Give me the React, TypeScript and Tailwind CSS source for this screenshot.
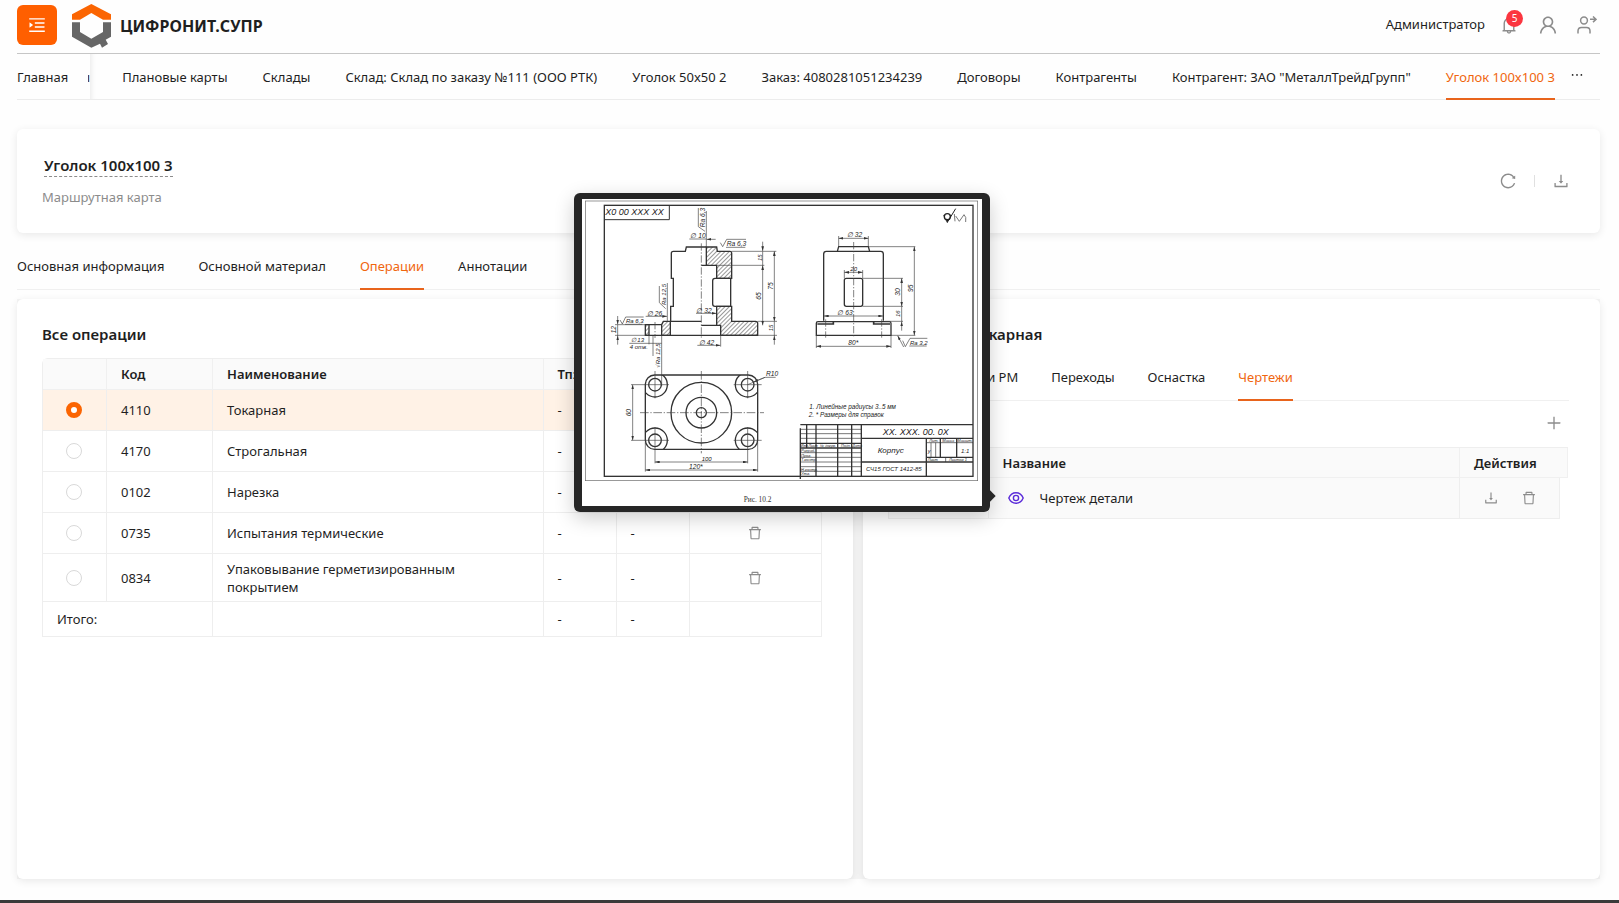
import { type ReactNode } from "react";
import {
  AiOutlineBell,
  AiOutlineDelete,
  AiOutlineDownload,
  AiOutlineEllipsis,
  AiOutlineMenuUnfold,
  AiOutlinePlus,
  AiOutlineReload,
  AiOutlineUser,
} from "react-icons/ai";

const cardShadow = "rounded-md bg-white shadow-[0_2px_8px_rgba(0,0,0,0.09)]";

function Logo() {
  return (
    <svg viewBox="0 0 117 132" className="h-11 w-[39px]" aria-hidden="true">
      <path d="M0 31 L58 0 L117 31 V47 H93 L58 27 L24 47 H0 Z" fill="#fb6502" />
      <path
        d="M0 55 H24 V84 L58 104 L93 84 V55 H117 V98 L101 107 L108 120 L90 131 L84 119 L58 131 L0 98 Z"
        fill="#666"
      />
    </svg>
  );
}

function SignOutIcon() {
  return (
    <svg viewBox="0 0 20 18" className="h-[18px] w-5" fill="none" stroke="currentColor" strokeWidth="1.5" aria-hidden="true">
      <circle cx="7" cy="4.5" r="3.4" />
      <path d="M1 17.5 V15 Q1 11.5 4.5 11.5 H9.5 Q13 11.5 13 15 V17.5" />
      <path d="M13 3.3 H19 M16 0.5 L19 3.3 L16 6.1" />
    </svg>
  );
}

function EyeIcon() {
  return (
    <svg viewBox="0 0 16 12" className="h-3 w-4" fill="none" stroke="currentColor" strokeWidth="1.4" aria-hidden="true">
      <path d="M0.8 6 C2.2 2.6 4.8 0.8 8 0.8 S13.8 2.6 15.2 6 C13.8 9.4 11.2 11.2 8 11.2 S2.2 9.4 0.8 6 Z" />
      <circle cx="8" cy="6" r="2.6" />
    </svg>
  );
}

function Tab({ children, active = false }: { children: ReactNode; active?: boolean }) {
  return (
    <button
      type="button"
      role="tab"
      aria-selected={active}
      className={
        active
          ? "-mb-px shrink-0 border-b-2 border-[#e8641c] pt-px text-[#f0660f] whitespace-nowrap"
          : "-mb-px shrink-0 border-b-2 border-transparent pt-px whitespace-nowrap"
      }
    >
      {children}
    </button>
  );
}

/* ---------- Drawing preview ---------- */

function DimText({ x, y, size = 20, rotate = false, children }: { x: number; y: number; size?: number; rotate?: boolean; children: ReactNode }) {
  return (
    <text x={x} y={y} fontSize={size} transform={rotate ? `rotate(-90 ${x} ${y})` : undefined}>
      {children}
    </text>
  );
}

function Dim({ d, both = true }: { d: string; both?: boolean }) {
  return <path d={d} markerEnd="url(#arrow)" markerStart={both ? "url(#arrow)" : undefined} />;
}

function Drawing() {
  return (
    <svg viewBox="0 0 1200 921" className="block w-full bg-white" role="img" aria-label="Чертеж детали">
      <defs>
        <pattern id="hatch" width="9" height="9" patternUnits="userSpaceOnUse" patternTransform="rotate(45)">
          <path d="M0 0 V9" stroke="#333" strokeWidth="3" />
        </pattern>
        <marker id="arrow" viewBox="0 0 14 8" refX="14" refY="4" markerWidth="14" markerHeight="8" markerUnits="userSpaceOnUse" orient="auto-start-reverse">
          <path d="M0 0 L14 4 L0 8 Z" fill="#333" />
        </marker>
        <clipPath id="plate">
          <rect x="241" y="72" width="337" height="223" rx="28" />
        </clipPath>
      </defs>
      <rect x="10" y="6" width="1177" height="839" fill="none" stroke="#666" strokeWidth="2" />
      <rect x="67" y="19" width="1106" height="813" fill="none" stroke="#333" strokeWidth="4" />
      <path d="M67 62 H262 V19" fill="none" stroke="#333" strokeWidth="3" />

      {/* Front view */}
      <g transform="translate(-51 -39)">
        <g fill="url(#hatch)" stroke="#333" strokeWidth="4">
          <path d="M424 183 H455 L457 196 H495 Q500 196 500 201 V277 H455 V238 H424 Z" />
          <path d="M455 361 H500 V406 H572 Q578 406 578 412 V448 H467 V418 H455 Z" />
          <path d="M241 416 H252 V448 H241 Z M290 416 L295 406 H316 V448 H290 Z" />
        </g>
        <g fill="none" stroke="#333" strokeWidth="4">
          <path d="M424 183 H364 L361 196 H325 Q319 196 319 202 V277 H325 V361 H317 V406 H409 M252 416 H290 M241 448 H578" />
          <path d="M409 238 H424 M409 418 H455 M497 277 V361 H450 Q443 361 443 354 V284 Q443 277 450 277 Z" />
        </g>
        <g fill="none" stroke="#444" strokeWidth="2">
          <path d="M409 172 V458 M270 408 V456" strokeDasharray="22 5 4 5" />
          <path d="M500 196 H634 M457 238 H598 M578 406 H636 M578 448 H636 M150 416 H241 M150 448 H241" />
          <path d="M424 75 V183 M400 66 V122 L420 136 M307 291 V406 M283 300 V350 L302 368 M290 448 V600 M264 450 V510 M252 448 V475" />
          <path d="M466 170 L473 182 L485 160 H543 M483 184 H541 M165 402 L172 414 L182 393 H236 M180 415 H232" />
          <Dim d="M593 167 V195" both={false} />
          <Dim d="M593 238 V418" />
          <Dim d="M628 196 V406" />
          <Dim d="M628 476 V449" both={false} />
          <path d="M593 196 V238 M628 406 V450" />
          <Dim d="M158 390 V415" both={false} />
          <Dim d="M158 476 V449" both={false} />
          <path d="M158 416 V450 M373 159 H424" />
          <Dim d="M452 160 H425" both={false} />
          <Dim d="M242 391 H306" both={false} />
          <Dim d="M393 382 H454" both={false} />
          <Dim d="M397 478 H466" both={false} />
          <path d="M467 448 V482 M193 472 H290" />
        </g>
      </g>

      {/* Plan view */}
      <g transform="translate(-51 456)" fill="none">
        <g stroke="#333" strokeWidth="4">
          <rect x="241" y="72" width="337" height="223" rx="28" />
          <g clipPath="url(#plate)">
            <circle cx="270" cy="101" r="37" />
            <circle cx="548" cy="101" r="37" />
            <circle cx="270" cy="268" r="37" />
            <circle cx="548" cy="268" r="37" />
          </g>
          <circle cx="270" cy="101" r="19" />
          <circle cx="548" cy="101" r="19" />
          <circle cx="270" cy="268" r="19" />
          <circle cx="548" cy="268" r="19" />
          <circle cx="409" cy="185" r="91" />
          <circle cx="409" cy="185" r="46" />
          <circle cx="409" cy="185" r="15" />
        </g>
        <g stroke="#444" strokeWidth="2">
          <path d="M225 185 H597 M409 60 V307" strokeDasharray="26 5 4 5" />
          <path d="M198 101 H312 M198 268 H312 M506 101 H590 M506 268 H590 M270 60 V142 M548 60 V142 M270 228 V337 M548 228 V337 M241 272 V362 M578 272 V362" />
          <Dim d="M203 101 V268" />
          <Dim d="M270 333 H548" />
          <Dim d="M241 357 H578" />
          <Dim d="M600 79 L566 93" both={false} />
          <path d="M548 101 L600 79 H632" />
        </g>
      </g>

      {/* Side view */}
      <g transform="translate(594 -39)" fill="none">
        <g stroke="#333" strokeWidth="4">
          <path d="M172 196 L176 182 H265 L269 196 M131 404 V204 Q131 196 139 196 H302 Q310 196 310 204 V404" />
          <path d="M109 448 V412 Q109 407 114 407 H328 Q333 407 333 412 V448 Z" />
          <path d="M112 414 H160 V407 M330 414 H281 V407" strokeWidth="5" />
          <rect x="193" y="277" width="55" height="84" rx="6" />
        </g>
        <g stroke="#444" strokeWidth="2">
          <path d="M221 168 V455 M137 400 V455 M305 400 V455" strokeDasharray="22 5 4 5" />
          <path d="M176 150 V182 M265 150 V182 M193 252 V277 M248 252 V277 M109 448 V486 M333 448 V486 M267 182 H406 M248 277 H369 M248 361 H369 M314 406 H369 M333 448 H406" />
          <Dim d="M176 157 H265" />
          <Dim d="M193 259 H248" />
          <Dim d="M132 390 H309" />
          <Dim d="M109 481 H333" />
          <Dim d="M365 277 V361" />
          <Dim d="M365 434 V407" both={false} />
          <path d="M365 361 V407 M388 480 H440" />
          <Dim d="M403 182 V448" />
          <Dim d="M371 483 L353 449" both={false} />
          <path d="M368 464 L376 482 L390 457 H442" />
        </g>
        <path d="M491 88 H513 L502 110 Z" fill="#222" stroke="#222" strokeWidth="2" />
        <circle cx="502" cy="92" r="9" fill="white" stroke="#222" strokeWidth="4" />
        <path d="M505 104 L527 68" stroke="#222" strokeWidth="3" />
        <path d="M523 84 L525 106 M527 90 L538 106 L552 86 Q560 92 557 108" stroke="#777" strokeWidth="3" />
      </g>

      {/* Title block */}
      <g transform="translate(594 456)" fill="none" stroke="#333">
        <path strokeWidth="4" d="M61 221 H579 M61 232 V384 M80 221 V291 M108 221 V376 M173 221 V376 M215 221 V376 M244 221 V376 M244 262 H579 M244 333 H579 M439 262 V376 M439 319 H579 M481 262 V319 M530 262 V319 M61 277 H244 M61 291 H244" />
        <path strokeWidth="2" d="M61 235 H244 M61 248 H244 M61 262 H244 M61 305 H244 M61 319 H244 M61 333 H244 M61 347 H244 M61 361 H244 M439 275 H579 M453 275 V319 M467 275 V319 M497 319 V333" />
      </g>

      <g fill="#222" fontFamily="Liberation Sans, sans-serif" fontStyle="italic">
        <g transform="translate(-51 -39)">
          <DimText x={121} y={88} size={27}>X0 00 XXX XX</DimText>
          <DimText x={376} y={157}>∅ 10</DimText>
          <DimText x={485} y={180}>Ra 6,3</DimText>
          <DimText x={419} y={124} rotate>Ra 6,3</DimText>
          <DimText x={590} y={225} size={18} rotate>15</DimText>
          <DimText x={624} y={311} rotate>75</DimText>
          <DimText x={589} y={341} rotate>65</DimText>
          <DimText x={624} y={436} size={18} rotate>15</DimText>
          <DimText x={246} y={390}>∅ 26</DimText>
          <DimText x={183} y={412} size={18}>Ra 6,3</DimText>
          <DimText x={302} y={357} size={18} rotate>Ra 12,5</DimText>
          <DimText x={394} y={380}>∅ 32</DimText>
          <DimText x={154} y={442} rotate>12</DimText>
          <DimText x={197} y={469} size={18}>∅ 13</DimText>
          <DimText x={194} y={488} size={18}>4 отв.</DimText>
          <DimText x={402} y={476}>∅ 42</DimText>
          <DimText x={285} y={545} size={18} rotate>√Ra 12,5</DimText>
        </g>
        <g transform="translate(-51 456)">
          <DimText x={199} y={196} rotate>60</DimText>
          <DimText x={603} y={76}>R10</DimText>
          <DimText x={410} y={330} size={18}>100</DimText>
          <DimText x={372} y={354}>120*</DimText>
        </g>
        <g transform="translate(594 -39)">
          <DimText x={201} y={154}>∅ 32</DimText>
          <DimText x={211} y={256} size={18}>20</DimText>
          <DimText x={172} y={387}>∅ 63</DimText>
          <DimText x={205} y={478}>80*</DimText>
          <DimText x={360} y={329} rotate>30</DimText>
          <DimText x={360} y={393} size={18} rotate>16</DimText>
          <DimText x={399} y={318} rotate>95</DimText>
          <DimText x={390} y={476} size={18}>Ra 3,2</DimText>
        </g>
        <g transform="translate(594 456)">
          <DimText x={88} y={174} size={19}>1. Линейные радиусы 3..5 мм</DimText>
          <DimText x={86} y={197} size={19}>2. * Размеры для справок</DimText>
          <DimText x={308} y={251} size={27}>XX. XXX. 00. 0X</DimText>
          <DimText x={293} y={307} size={24}>Корпус</DimText>
          <DimText x={258} y={360} size={18}>СЧ15 ГОСТ 1412-85</DimText>
          <DimText x={448} y={273} size={12}>Лит.</DimText>
          <DimText x={487} y={273} size={12}>Масса</DimText>
          <DimText x={532} y={273} size={12}>Масшт.</DimText>
          <DimText x={443} y={306} size={16}>у</DimText>
          <DimText x={543} y={306} size={18}>1:1</DimText>
          <DimText x={443} y={331} size={12}>Лист</DimText>
          <DimText x={507} y={331} size={12}>Листов 1</DimText>
          <DimText x={62} y={289} size={11}>Изм.Лист</DimText>
          <DimText x={120} y={289} size={11}>№ докум.</DimText>
          <DimText x={183} y={289} size={11}>Подп.</DimText>
          <DimText x={217} y={289} size={11}>Дата</DimText>
          <DimText x={63} y={303} size={12}>Разраб.</DimText>
          <DimText x={63} y={317} size={12}>Пров.</DimText>
          <DimText x={63} y={331} size={12}>Т.контр.</DimText>
          <DimText x={63} y={359} size={12}>Н.контр.</DimText>
          <DimText x={63} y={373} size={12}>Утв.</DimText>
        </g>
      </g>
      <text x="485" y="910" fontSize="22" fill="#333" fontFamily="Liberation Serif, serif">
        Рис. 10.2
      </text>
    </svg>
  );
}

/* ---------- Tables ---------- */

const operations = [
  { code: "4110", name: "Токарная" },
  { code: "4170", name: "Строгальная" },
  { code: "0102", name: "Нарезка" },
  { code: "0735", name: "Испытания термические" },
  { code: "0834", name: "Упаковывание герметизированным покрытием" },
];

const th = "border-r border-b border-[#f0f0f0] bg-[#fafafa] px-[14px] text-left font-semibold";
const td = "border-r border-b border-[#eeeeee] px-[14px]";

function OperationsTable() {
  return (
    <div className="mr-[6px] rounded-tl-md border-t border-l border-[#eeeeee]">
      <table className="w-full table-fixed border-separate border-spacing-0 leading-[18px]">
        <colgroup>
          <col className="w-16" />
          <col className="w-[106px]" />
          <col />
          <col className="w-[73px]" />
          <col className="w-[73px]" />
          <col className="w-[132px]" />
        </colgroup>
        <thead>
          <tr className="h-[31px]">
            <th className={th} aria-label="Выбор" />
            <th className={th}>Код</th>
            <th className={th}>Наименование</th>
            <th className={th}>Тпз</th>
            <th className={th}>Тшт</th>
            <th className={th}>Действия</th>
          </tr>
        </thead>
        <tbody>
          {operations.map((op, i) => (
            <tr key={op.code} className={i === 0 ? "h-[41px] bg-[#fff2e6]" : i === 4 ? "h-12" : "h-[41px]"}>
              <td className={`${td} pr-4`}>
                <input
                  type="radio"
                  name="operation"
                  aria-label={op.name}
                  defaultChecked={i === 0}
                  className="mx-auto block size-4 appearance-none rounded-full border border-[#d9d9d9] bg-white checked:border-[5px] checked:border-[#fb6502]"
                />
              </td>
              <td className={td}>{op.code}</td>
              <td className={`${td} pr-16`}>{op.name}</td>
              <td className={td}>-</td>
              <td className={td}>-</td>
              <td className={td}>
                <button type="button" aria-label="Удалить" className="mx-auto block text-[#8c8c8c]">
                  <AiOutlineDelete className="size-4" />
                </button>
              </td>
            </tr>
          ))}
        </tbody>
        <tfoot>
          <tr className="h-[35px]">
            <td className={td} colSpan={2}>
              Итого:
            </td>
            <td className={td} />
            <td className={td}>-</td>
            <td className={td}>-</td>
            <td className={td} />
          </tr>
        </tfoot>
      </table>
    </div>
  );
}

function DrawingsTable() {
  return (
    <div className="border-t border-l border-[#eeeeee]">
      <table className="w-full table-fixed border-separate border-spacing-0 leading-[18px]">
        <colgroup>
          <col className="w-[100px]" />
          <col />
          <col className="w-[100px]" />
          <col className="w-2" />
        </colgroup>
        <thead>
          <tr className="h-[30px]">
            <th className={th}>№</th>
            <th className={th}>Название</th>
            <th className={th} colSpan={2}>
              Действия
            </th>
          </tr>
        </thead>
        <tbody>
          <tr className="h-[41px] bg-[#fafafa]">
            <td className={td}>1</td>
            <td className={td}>
              <div className="flex items-center gap-4">
                <div className="relative flex">
                  <button type="button" aria-label="Просмотр" className="ml-[5px] text-[#5b2bd9]">
                    <EyeIcon />
                  </button>
                  <div
                    role="tooltip"
                    className="absolute right-full -bottom-2 z-20 mr-[13px] w-[416px] rounded-md bg-[#262626] px-2 py-[6px] shadow-[0_6px_20px_rgba(0,0,0,0.2)]"
                  >
                    <Drawing />
                    <div className="absolute -right-1 bottom-3 size-2 rotate-45 bg-[#262626]" />
                  </div>
                </div>
                <span>Чертеж детали</span>
              </div>
            </td>
            <td className={td}>
              <div className="flex items-center gap-[22px] pl-[9px] text-[#8c8c8c]">
                <button type="button" aria-label="Скачать">
                  <AiOutlineDownload className="size-4" />
                </button>
                <button type="button" aria-label="Удалить">
                  <AiOutlineDelete className="size-4" />
                </button>
              </div>
            </td>
            <td className="bg-white" />
          </tr>
        </tbody>
      </table>
    </div>
  );
}

/* ---------- Page ---------- */

export default function App() {
  return (
    <div className="flex min-h-screen flex-col border-b-[3px] border-[#3a3a3a] bg-[#fefefe] pr-[19px] pl-[17px] font-['Noto_Sans','Open_Sans',sans-serif] text-[13px] text-[#1f1f1f]">
      <header className="flex h-[54px] items-center border-b border-[#c6c6c6] pb-[3px]">
        <button type="button" aria-label="Меню" className="flex size-10 items-center justify-center rounded-md bg-[#ff5f00] text-white">
          <AiOutlineMenuUnfold className="size-5" />
        </button>
        <a href="#home" className="ml-[15px] flex items-center gap-[9px] pt-[2px]">
          <Logo />
          <span className="text-base font-bold">ЦИФРОНИТ.СУПР</span>
        </a>
        <div className="ml-auto flex items-center gap-[18px] pr-[3px] text-[#8c8c8c]">
          <span className="text-[#1f1f1f]">Администратор</span>
          <button type="button" aria-label="Уведомления" className="relative -ml-1">
            <AiOutlineBell className="size-5" />
            <span className="absolute -top-[5px] left-[7px] flex size-[17px] items-center justify-center rounded-full bg-[#fb3640] text-[10px] text-white">5</span>
          </button>
          <button type="button" aria-label="Профиль">
            <AiOutlineUser className="size-[22px]" />
          </button>
          <button type="button" aria-label="Выйти">
            <SignOutIcon />
          </button>
        </div>
      </header>

      <nav className="flex h-[46px] border-b border-[#ececec]" role="tablist" aria-label="Открытые страницы">
        <div className="flex shrink-0 pt-[2px] pr-5">
          <Tab>Главная</Tab>
        </div>
        <div className="flex w-[2px] shrink-0 justify-end overflow-hidden pt-[2px]">
          <Tab>Заказы</Tab>
        </div>
        <div className="flex min-w-0 gap-[35px] pt-[2px] pl-8 shadow-[inset_6px_0_6px_-6px_rgba(0,0,0,0.12)]">
          <Tab>Плановые карты</Tab>
          <Tab>Склады</Tab>
          <Tab>Склад: Склад по заказу №111 (ООО РТК)</Tab>
          <Tab>Уголок 50x50 2</Tab>
          <Tab>Заказ: 4080281051234239</Tab>
          <Tab>Договоры</Tab>
          <Tab>Контрагенты</Tab>
          <Tab>Контрагент: ЗАО "МеталлТрейдГрупп"</Tab>
          <Tab active>Уголок 100x100 3</Tab>
        </div>
        <button type="button" aria-label="Ещё" className="ml-auto pr-[15px] pb-[3px]">
          <AiOutlineEllipsis className="size-4" />
        </button>
      </nav>

      <section className={`${cardShadow} mt-[29px] flex items-center justify-between px-[25px] pt-[25px] pb-[25px]`}>
        <div>
          <h1 className="ml-[2px] w-fit border-b border-dashed border-[#8c8c8c] text-[15px] leading-[22px] font-semibold">Уголок 100x100 3</h1>
          <p className="mt-[9px] leading-[22px] text-[#8c8c8c]">Маршрутная карта</p>
        </div>
        <div className="flex items-center gap-[17px] pr-[5px] text-[#8c8c8c]">
          <button type="button" aria-label="Обновить">
            <AiOutlineReload className="size-[18px]" />
          </button>
          <span className="h-3 w-px bg-[#e0e0e0]" />
          <button type="button" aria-label="Скачать">
            <AiOutlineDownload className="size-[18px]" />
          </button>
        </div>
      </section>

      <div className="mt-[11px] flex h-[46px] gap-[34px] border-b border-[#f0f0f0]" role="tablist" aria-label="Разделы карты">
        <Tab>Основная информация</Tab>
        <Tab>Основной материал</Tab>
        <Tab active>Операции</Tab>
        <Tab>Аннотации</Tab>
      </div>

      <main className="mt-[9px] mb-[21px] grid grow grid-cols-[minmax(0,835fr)_minmax(0,737fr)] gap-[10px] bg-[#f5f5f5]">
        <section className={`${cardShadow} px-[25px] pt-[23px]`}>
          <h2 className="mb-3 text-[15px] leading-6 font-semibold">Все операции</h2>
          <OperationsTable />
        </section>
        <section className={`${cardShadow} px-[25px] pt-[23px]`}>
          <h2 className="text-[15px] leading-6 font-semibold">Операция: Токарная</h2>
          <div className="mt-[9px] mr-[6px] flex h-[46px] gap-[33px] border-b border-[#f0f0f0] pl-1" role="tablist" aria-label="Разделы операции">
            <Tab>Оборудование и РМ</Tab>
            <Tab>Переходы</Tab>
            <Tab>Оснастка</Tab>
            <Tab active>Чертежи</Tab>
          </div>
          <div className="mr-[6px] flex h-[46px] items-center justify-end pr-[6px] pb-[2px] text-[#8c8c8c]">
            <button type="button" aria-label="Добавить">
              <AiOutlinePlus className="size-[18px]" />
            </button>
          </div>
          <div className="mr-[7px]">
            <DrawingsTable />
          </div>
        </section>
      </main>
    </div>
  );
}
